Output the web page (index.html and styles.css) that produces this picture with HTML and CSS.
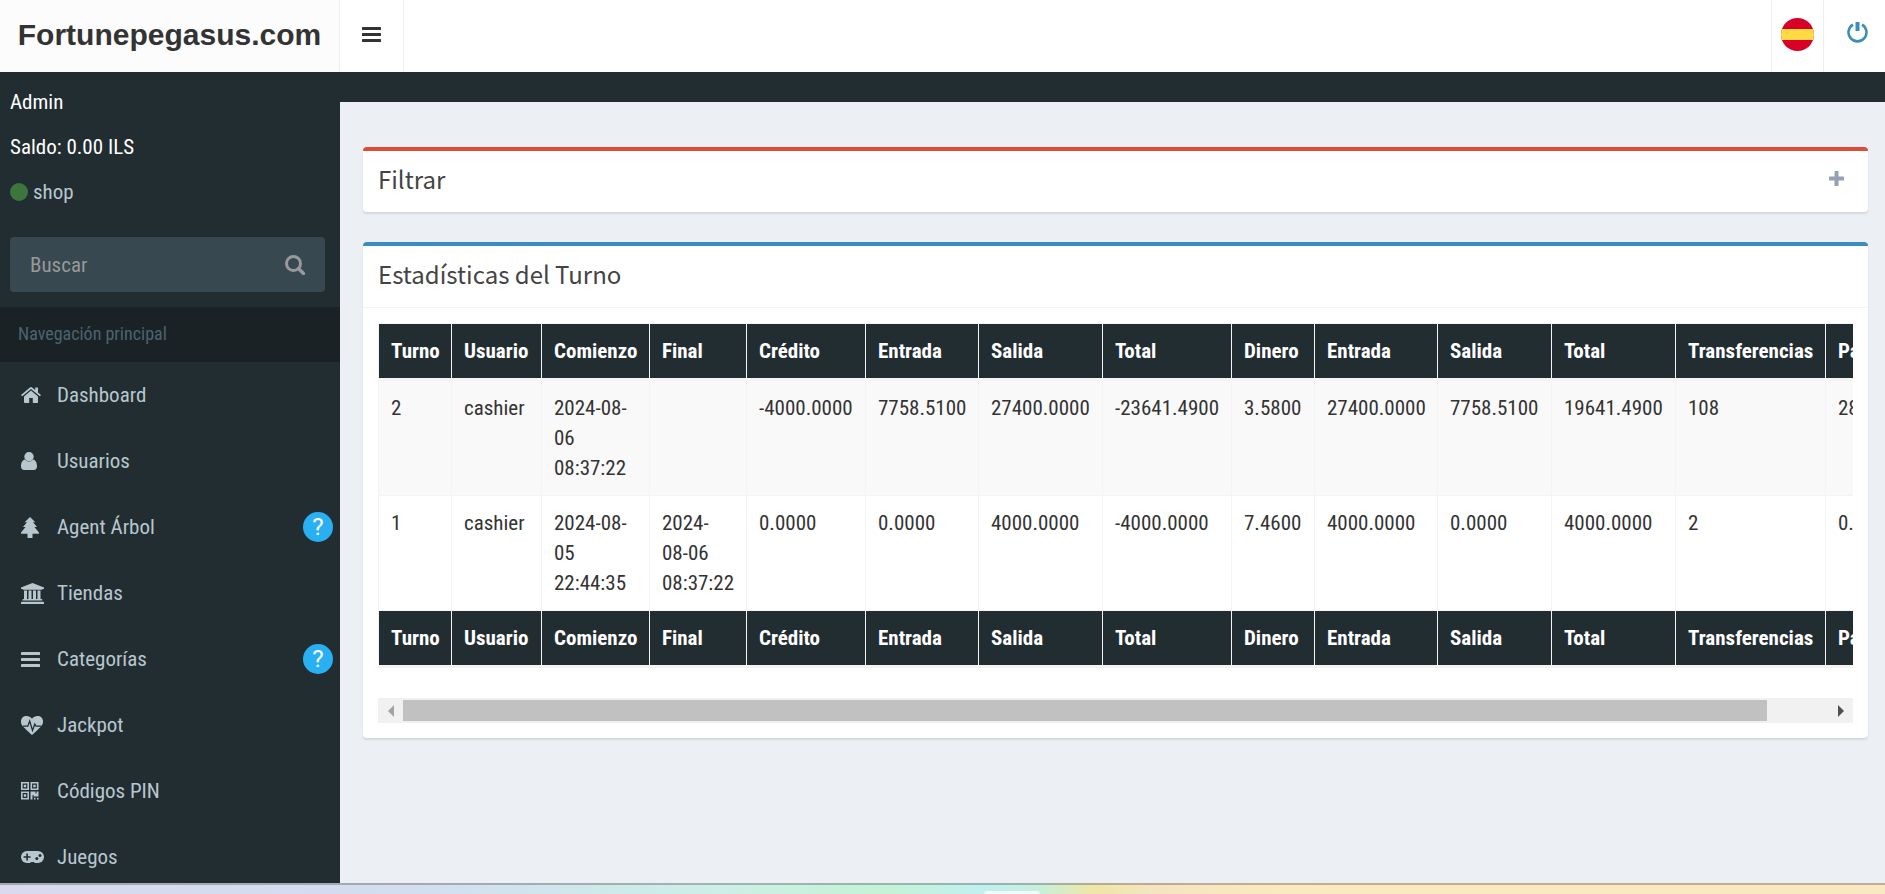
FILE: index.html
```html
<!DOCTYPE html>
<html lang="es">
<head>
<meta charset="utf-8">
<title>Fortunepegasus.com</title>
<link rel="stylesheet" href="styles.css">
</head>
<body>
<header class="topbar">
  <a class="logo" href="#">Fortunepegasus.com</a>
  <button class="toggle" type="button" aria-label="Menú">
    <svg width="19" height="16" viewBox="0 0 19 16" fill="currentColor"><rect width="19" height="3" rx=".6"/><rect y="6" width="19" height="3" rx=".6"/><rect y="12" width="19" height="3" rx=".6"/></svg>
  </button>
  <button class="lang" type="button" aria-label="Español">
    <svg width="33" height="33" viewBox="0 0 33 33"><clipPath id="disc"><circle cx="16.500" cy="16.500" r="16.500"/></clipPath><g clip-path="url(#disc)"><rect width="33" height="33" fill="#d80027"/><rect y="11" width="33" height="11" fill="#ffda44"/></g></svg>
  </button>
  <a class="power" href="#" aria-label="Salir">
    <svg width="21" height="21" viewBox="0 0 21 21" fill="none" stroke="currentColor"><path d="M6 2.600A9 9 0 1 0 15 2.600" stroke-width="2.600"/><path d="M10.500 0V9" stroke-width="4"/></svg>
  </a>
</header>

<div class="layout">
  <aside class="sidebar">
    <div class="profile">
      <p>Admin</p>
      <p>Saldo: 0.00 ILS</p>
      <p class="role"><span class="dot"></span>shop</p>
    </div>
    <form class="search">
      <input type="text" placeholder="Buscar" aria-label="Buscar">
      <button type="button" aria-label="Buscar"><svg width="20" height="20" viewBox="0 0 20 20" fill="none" stroke="currentColor"><circle cx="8.500" cy="8.500" r="7" stroke-width="3"/><path d="M13.500 13.500L18.500 18.500" stroke-width="3.400" stroke-linecap="round"/></svg></button>
    </form>
    <h2 class="nav-title">Navegación principal</h2>
    <nav class="menu">
      <a href="#"><span class="icon"><svg width="20" height="16" viewBox="0 0 20 16" fill="currentColor"><path d="M10 3.600L3 9.400V15.200a.8.800 0 0 0 .8.800H8.200V11h3.600v5h4.400a.8.800 0 0 0 .8-.8V9.400z"/><path d="M19.700 7.800L17 5.500V.8a.4.400 0 0 0-.4-.4h-2a.4.400 0 0 0-.4.400V3L11.100.5a1.700 1.700 0 0 0-2.200 0L.3 7.800a.4.400 0 0 0 0 .6l.6.700c.2.200.4.200.6 0L10 2l8.500 7.100c.2.200.4.200.6 0l.6-.7a.4.400 0 0 0 0-.6z"/></svg></span>Dashboard</a>
      <a href="#"><span class="icon"><svg width="16" height="18" viewBox="0 0 16 18" fill="currentColor"><circle cx="8" cy="4.700" r="4.700"/><path d="M3.800 7.600C1 8.300 0 11.500 0 14.500 0 16.700 1.300 18 3.300 18h9.400c2 0 3.300-1.300 3.300-3.500 0-3-1-6.200-3.800-6.900A6 6 0 0 1 8 9.800a6 6 0 0 1-4.200-2.200z"/></svg></span>Usuarios</a>
      <a href="#"><span class="icon"><svg width="18" height="21" viewBox="0 0 18 21" fill="currentColor"><path d="M9 0L14.300 5.300h-2.300L16 10h-2.600L18 15.600c.2.700-.2 1.200-.8 1.200H11.500V21h-5V16.800H.8C.2 16.800-.2 16.300 0 15.600L4.600 10H2L6 5.300H3.700z"/></svg></span>Agent Árbol<span class="help">?</span></a>
      <a href="#"><span class="icon"><svg width="23" height="21" viewBox="0 0 23 21" fill="currentColor"><path d="M11.500 0L23 4.500V6h-1.500c0 .5-.4.800-.8.800H2.300c-.4 0-.8-.3-.8-.8H0V4.500zM3 7.500h3V16h1.500V7.500h3V16H12V7.500h3V16h1.500V7.500h3V16h1c.5 0 .8.300.8.700V17.500H1.500v-.8c0-.4.300-.7.800-.7H3zM0 20c0-.8.300-1.300.8-1.300h21.400c.5 0 .8.500.8 1.300v1H0z"/></svg></span>Tiendas</a>
      <a href="#"><span class="icon"><svg width="19" height="15" viewBox="0 0 19 15" fill="currentColor"><rect width="19" height="3" rx=".6"/><rect y="6" width="19" height="3" rx=".6"/><rect y="12" width="19" height="3" rx=".6"/></svg></span>Categorías<span class="help">?</span></a>
      <a href="#"><span class="icon"><svg width="22" height="19" viewBox="0 0 22 19"><path fill="currentColor" d="M11 19C10 18.500 4 12.500 2 10.500-.7 8-.5 3.500 1.500 1.500c2.600-2.200 7-2 9.500 1.300C13.500-.5 17.900-.7 20.500 1.500c2 2 2.200 6.500-.5 9-2 2-8 8-9 8.500z"/><path d="M2 10.200H6.800L8.700 5l2.800 9.500 2.300-6.500 1.200 2.200H20.500" fill="none" stroke="#222d32" stroke-width="1.300"/></svg></span>Jackpot</a>
      <a href="#"><span class="icon"><svg width="18" height="18" viewBox="0 0 18 18" fill="none" stroke="currentColor" stroke-width="1.600"><path d="M.8.800h6.400v6.400H.8zM10.300.8h6.400v6.400h-6.400zM.8 10.300h6.400v6.400H.8z"/><path d="M2.800 2.800h2.400v2.400H2.800zM12.300 2.800h2.400v2.400h-2.400zM2.800 12.300h2.400v2.400H2.800zM9.500 9.500h5v2h1v-2h2v5h-5v-1.500h-1v4.500h-2zM13 15.700h1.500v1.800H13zM16 15.700h1.500v1.800H16z" fill="currentColor" stroke="none"/></svg></span>Códigos PIN</a>
      <a href="#"><span class="icon"><svg width="23" height="12" viewBox="0 0 23 12"><rect width="23" height="12" rx="6" fill="currentColor"/><path d="M9 12c.6-1.500 4.400-1.500 5 0zM5.300 2.600h1.600v2.600h2.700v1.600H6.900v2.600H5.300V6.800H2.600V5.200h2.700z" fill="#222d32"/><circle cx="15.800" cy="7.500" r="1.500" fill="#222d32"/><circle cx="19" cy="4.500" r="1.500" fill="#222d32"/></svg></span>Juegos</a>
    </nav>
  </aside>

  <main class="content">
    <section class="box box-red">
      <div class="box-head">
        <h3>Filtrar</h3>
        <button type="button" aria-label="Expandir"><svg width="15" height="15" viewBox="0 0 15 15" fill="currentColor"><path d="M5.500.6a.6.600 0 0 1 .6-.6h2.800a.6.600 0 0 1 .6.600V5.500h4.900a.6.600 0 0 1 .6.600v2.800a.6.600 0 0 1-.6.600H9.500v4.900a.6.600 0 0 1-.6.600H6.100a.6.600 0 0 1-.6-.6V9.500H.6a.6.600 0 0 1-.6-.6V6.100a.6.600 0 0 1 .6-.6h4.900z"/></svg></button>
      </div>
    </section>
    <section class="box box-blue">
      <div class="box-head ruled"><h3>Estadísticas del Turno</h3></div>
      <div class="box-body">
        <div class="scroller">
          <table>
            <colgroup><col class="w73"><col class="w90"><col class="w108"><col class="w97"><col class="w119"><col class="w113"><col class="w124"><col class="w129"><col class="w83"><col class="w123"><col class="w114"><col class="w124"><col class="w150"><col class="w119"></colgroup>
            <thead><tr><th>Turno</th><th>Usuario</th><th>Comienzo</th><th>Final</th><th>Crédito</th><th>Entrada</th><th>Salida</th><th>Total</th><th>Dinero</th><th>Entrada</th><th>Salida</th><th>Total</th><th>Transferencias</th><th>Pagos</th></tr></thead>
            <tbody>
              <tr><td>2</td><td>cashier</td><td>2024-08-<br>06<br>08:37:22</td><td></td><td>-4000.0000</td><td>7758.5100</td><td>27400.0000</td><td>-23641.4900</td><td>3.5800</td><td>27400.0000</td><td>7758.5100</td><td>19641.4900</td><td>108</td><td>28</td></tr>
              <tr><td>1</td><td>cashier</td><td>2024-08-<br>05<br>22:44:35</td><td>2024-<br>08-06<br>08:37:22</td><td>0.0000</td><td>0.0000</td><td>4000.0000</td><td>-4000.0000</td><td>7.4600</td><td>4000.0000</td><td>0.0000</td><td>4000.0000</td><td>2</td><td>0.</td></tr>
            </tbody>
            <tfoot><tr><th>Turno</th><th>Usuario</th><th>Comienzo</th><th>Final</th><th>Crédito</th><th>Entrada</th><th>Salida</th><th>Total</th><th>Dinero</th><th>Entrada</th><th>Salida</th><th>Total</th><th>Transferencias</th><th>Pagos</th></tr></tfoot>
          </table>
        </div>
        <div class="scrollbar">
          <button type="button" aria-label="Desplazar a la izquierda" disabled><svg width="6" height="12" viewBox="0 0 6 12" fill="currentColor"><path d="M6 0V12L0 6z"/></svg></button>
          <div class="track"><div class="thumb"></div></div>
          <button type="button" aria-label="Desplazar a la derecha"><svg width="6" height="12" viewBox="0 0 6 12" fill="currentColor"><path d="M0 0V12L6 6z"/></svg></button>
        </div>
      </div>
    </section>
  </main>
</div>
<footer class="desktop-edge"><span class="tab"></span></footer>
</body>
</html>
```
FILE: styles.css
```css
* { box-sizing: border-box; }
body {
  margin: 0;
  height: 100vh;
  overflow: hidden;
  display: flex;
  flex-direction: column;
  font-family: "Roboto Condensed", Roboto, sans-serif;
  font-size: 21px;
  line-height: 30px;
  color: #333;
  background: #222d32;
}
a { color: inherit; text-decoration: none; }
button { border: 0; padding: 0; background: none; font: inherit; color: inherit; display: flex; align-items: center; justify-content: center; }
h2, h3, p { margin: 0; font-weight: 400; }
svg { display: block; flex: none; }

.topbar { flex: none; height: 72px; display: flex; background: #fff; }
.logo {
  width: 340px;
  padding-bottom: 2px;
  display: flex;
  align-items: center;
  justify-content: center;
  background: #fcfcfc;
  border-right: 1px solid #eee;
  font-family: "Liberation Sans", Arial, sans-serif;
  font-size: 30px;
  font-weight: 700;
}
.toggle { width: 64px; padding-bottom: 2px; border-right: 1px solid #eee; }
.lang { width: 53px; margin-left: auto; padding-bottom: 3px; border: solid #eee; border-width: 0 1px; }
.power { width: 61px; padding: 22px 0 0 23px; color: #3c8dbc; }

.layout { flex: 1; min-height: 0; display: flex; }
.sidebar { width: 340px; flex: none; overflow: hidden; color: #b8c7ce; }
.profile { padding: 15px 10px 30px; display: grid; gap: 15px; color: #fff; }
.role { display: flex; align-items: center; gap: 5px; color: #b8c7ce; }
.dot { width: 18px; height: 18px; border-radius: 50%; background: #3c763d; }
.search { margin: 0 15px 15px 10px; height: 55px; display: flex; border-radius: 4px; background: #374850; color: #999; }
.search input { flex: 1; min-width: 0; padding: 0 20px; border: 0; background: none; font: inherit; color: #fff; outline: 0; }
.search input::placeholder { color: #999; opacity: 1; }
.search button { width: 60px; }
.nav-title { height: 55px; padding: 12px 18px; background: #1a2226; color: #4b646f; font-size: 18px; }
.menu a { height: 66px; padding: 0 7px 0 21px; display: flex; align-items: center; }
.icon { width: 36px; flex: none; }
.help {
  width: 30px;
  height: 30px;
  margin-left: auto;
  border-radius: 50%;
  background: #29b0f3;
  color: #fff;
  font-family: Roboto, sans-serif;
  font-size: 24px;
  text-align: center;
}

.content { flex: 1; min-width: 0; margin-top: 30px; padding: 45px 17px 0 23px; background: #ecf0f5; }
.box { margin-bottom: 30px; border-top: 4px solid; border-radius: 4px; background: #fff; box-shadow: 0 2px 2px rgba(0, 0, 0, .1); }
.box-red { border-color: #dd4b39; }
.box-blue { border-color: #3c8dbc; }
.box-head { height: 61px; padding: 0 24px 6px 15px; display: flex; align-items: center; justify-content: space-between; color: #444; }
.box-head.ruled { height: 62px; border-bottom: 1px solid #f4f4f4; }
.box-head h3 { font-family: "Source Sans Pro", "Noto Sans CJK SC", "Noto Sans", sans-serif; font-size: 24px; }
.box-head button { color: #97a0b3; }
.box-body { padding: 15px; }
.scroller { overflow: hidden; padding-bottom: 30px; }

table { table-layout: fixed; width: 1566px; border-collapse: separate; border-spacing: 0; border-left: 1px solid #f4f4f4; border-top: 1px solid #f4f4f4; }
th, td { padding: 12px 0 12px 12px; text-align: left; vertical-align: top; white-space: nowrap; border-right: 1px solid #f4f4f4; border-bottom: 1px solid #f4f4f4; }
th { background: #222d32; background-clip: padding-box; color: #fff; font-weight: 700; border-bottom-width: 3px; }
tbody tr:first-child td { background: #f9f9f9; }
.w73 { width: 73px; }
.w83 { width: 83px; }
.w90 { width: 90px; }
.w97 { width: 97px; }
.w108 { width: 108px; }
.w113 { width: 113px; }
.w114 { width: 114px; }
.w119 { width: 119px; }
.w123 { width: 123px; }
.w124 { width: 124px; }
.w129 { width: 129px; }
.w150 { width: 150px; }

.scrollbar { height: 25px; display: flex; background: #f1f1f1; color: #505050; }
.scrollbar button { width: 25px; flex: none; }
.scrollbar button:disabled { color: #a3a3a3; }
.track { flex: 1; padding: 2px 0; }
.thumb { width: 95.7%; height: 21px; background: #c1c1c1; }

.desktop-edge {
  flex: none;
  height: 11px;
  display: flex;
  align-items: flex-end;
  padding-left: 52.2%;
  border-top: 2px solid rgba(90, 90, 90, .4);
  background: linear-gradient(90deg, #d9daef 0%, #d3def0 22%, #cdeee8 37%, #c4f3d8 47%, #bff0ef 52%, #c6efdf 55%, #efe6a6 58%, #f5e4c0 61%, #fce9bd 68%, #fbe8c0 100%);
}
.tab { width: 56px; height: 3px; border-radius: 4px 4px 0 0; background: #f0faf8; }
```
